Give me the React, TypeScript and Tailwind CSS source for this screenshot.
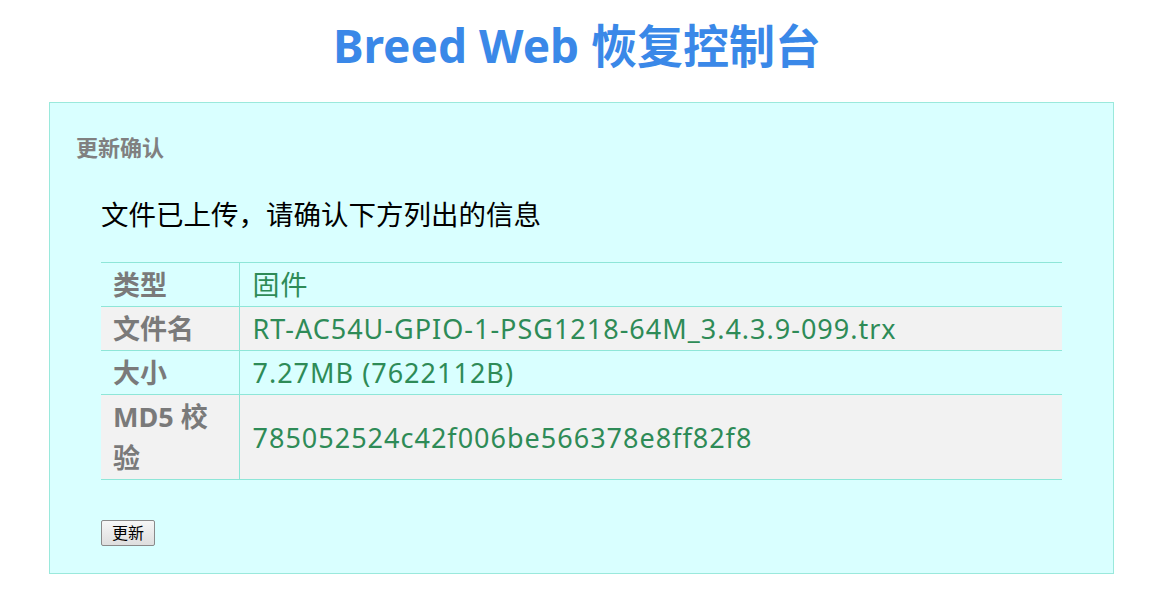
import React from 'react';

const rows = [
  { label: '类型', value: '固件' },
  { label: '文件名', value: 'RT-AC54U-GPIO-1-PSG1218-64M_3.4.3.9-099.trx' },
  { label: '大小', value: '7.27MB (7622112B)' },
  { label: 'MD5 校验', value: '785052524c42f006be566378e8ff82f8' },
];

const font = "font-['Noto_Sans','Noto_Sans_CJK_SC',sans-serif]";

export default function App() {
  return (
    <div className={`min-h-[595px] bg-white ${font}`}>
      {/* Title */}
      <h1 className="pt-[12px] text-center text-[46px] font-bold leading-[66px] text-[#3a88e8]">
        Breed Web 恢复控制台
      </h1>

      {/* Panel */}
      <div className="ml-[49px] mr-[40px] mt-[24px] border border-[#9ae9dc] bg-[#d9ffff] pb-[27px]">
        <h2 className="pl-[26px] pt-[30px] text-[22px] font-bold leading-[28px] text-[#808080]">
          更新确认
        </h2>

        <div className="px-[51px]">
          <p className="mt-[34px] text-[27.5px] leading-[40px] text-black">
            文件已上传，请确认下方列出的信息
          </p>

          <table className="mt-[27px] w-full border-collapse text-[27px] leading-[41px]">
            <tbody>
              {rows.map((row, i) => (
                <tr
                  key={row.label}
                  className={`border-y border-[#8ee6d8] ${i % 2 === 1 ? 'bg-[#f2f2f2]' : ''}`}
                >
                  <th className="w-[138px] border-r border-[#8ee6d8] px-[12px] py-px text-left align-middle font-bold text-[#7a7a7a]">
                    {row.label}
                  </th>
                  <td className="px-[13px] py-px align-middle tracking-[1px] text-[#2e8b57]">
                    {row.value}
                  </td>
                </tr>
              ))}
            </tbody>
          </table>

          <button className="mt-[40px] block h-[26px] w-[54px] rounded-[2px] border border-[#8a8a8a] bg-gradient-to-b from-[#f6f6f6] to-[#dedede] text-[16px] leading-none text-black">
            更新
          </button>
        </div>
      </div>
    </div>
  );
}
